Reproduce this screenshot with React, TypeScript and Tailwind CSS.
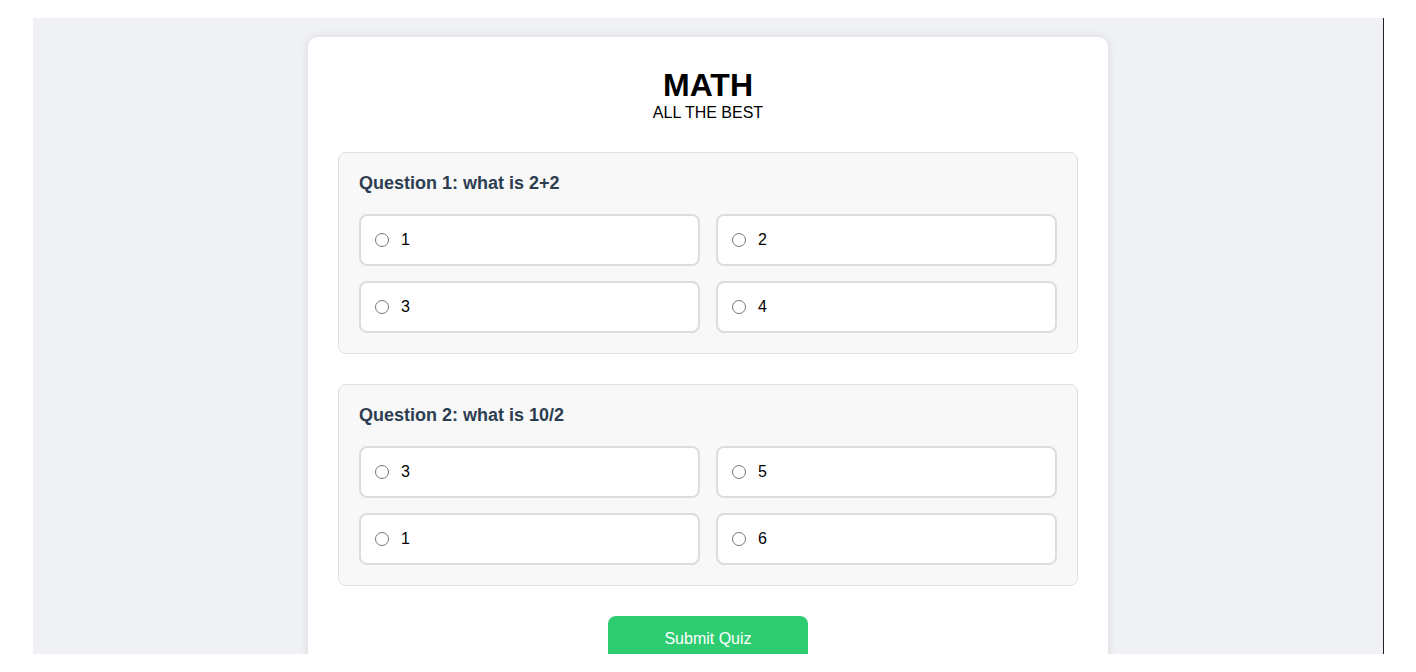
const questions = [
  { title: "Question 1: what is 2+2", options: ["1", "2", "3", "4"] },
  { title: "Question 2: what is 10/2", options: ["3", "5", "1", "6"] },
];

const App = () => {
  return (
    <div className="h-[672px] bg-white overflow-hidden font-['Liberation_Sans',Arial,sans-serif]">
      <div className="flex pt-[18px] pl-[33px]">
        <div className="w-[1350px] h-[636px] bg-[#f0f1f5] overflow-hidden">
          {/* quiz card */}
          <div className="mx-auto mt-[19px] w-[800px] rounded-[10px] bg-white p-[30px] shadow-[0_0_10px_rgba(0,0,0,0.1)]">
            <div className="text-center mb-[30px]">
              <h1 className="text-[32px] font-bold leading-[37px] text-black">MATH</h1>
              <p className="text-[16px] leading-[18px] text-black">ALL THE BEST</p>
            </div>

            {questions.map((q, qi) => (
              <div
                key={qi}
                className="mb-[30px] rounded-[8px] border border-[#e0e0e0] bg-[#f8f8f8] p-[20px]"
              >
                <h3 className="mb-[20px] text-[18px] font-bold leading-[21px] text-[#2c3e50]">
                  {q.title}
                </h3>
                <div className="grid grid-cols-2 gap-x-[16px] gap-y-[15px]">
                  {q.options.map((opt, oi) => (
                    <label
                      key={oi}
                      className="flex h-[52px] items-center rounded-[8px] border-2 border-[#dddddd] bg-white px-[14px] text-[16px] text-black"
                    >
                      <input
                        type="radio"
                        name={"q" + qi}
                        className="mr-[12px] h-[14px] w-[14px] appearance-none rounded-full border border-[#767676] bg-white"
                      />
                      {opt}
                    </label>
                  ))}
                </div>
              </div>
            ))}

            <div className="flex justify-center">
              <button className="h-[46px] w-[200px] rounded-[8px] bg-[#2ecc71] text-[16px] text-white">
                Submit Quiz
              </button>
            </div>
          </div>
        </div>
        <div className="h-[636px] w-px bg-[#222222]" />
      </div>
    </div>
  );
};

export default App;
